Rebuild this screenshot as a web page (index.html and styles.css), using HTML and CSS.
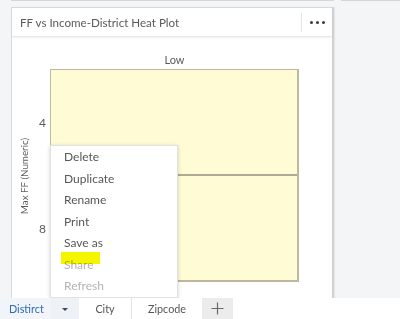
FILE: index.html
```html
<!DOCTYPE html>
<html lang="en">
<head>
<meta charset="utf-8">
<title>Heat Plot</title>
<link rel="stylesheet" href="styles.css">
</head>
<body>
<div class="dash">
  <div class="top-row">
    <div class="top-seg top-seg-main"></div>
    <div class="top-seg top-seg-side"></div>
  </div>
  <div class="card">
    <div class="card-head">
      <div class="card-title">FF vs Income-District Heat Plot</div>
      <div class="head-divider"></div>
      <button class="more" aria-label="More options"><span></span><span></span><span></span></button>
    </div>
    <div class="chart">
      <div class="y-title"><span>Max FF (Numeric)</span></div>
      <div class="col-label">Low</div>
      <div class="ticks">
        <div class="tick">4</div>
        <div class="tick">8</div>
      </div>
      <div class="plot">
        <div class="cell"></div>
        <div class="cell cell-bottom"></div>
      </div>
    </div>
  </div>
  <div class="menu">
    <div class="item">Delete</div>
    <div class="item">Duplicate</div>
    <div class="item">Rename</div>
    <div class="item">Print</div>
    <div class="item">Save as</div>
    <div class="item disabled">Share</div>
    <div class="item disabled">Refresh</div>
    <div class="marker"></div>
  </div>
</div>
<div class="tabs">
  <div class="tab tab-active">Distirct</div>
  <div class="tab-drop"><span class="caret"></span></div>
  <div class="tab tab-city">City</div>
  <div class="tab tab-zip">Zipcode</div>
  <div class="tab-add">
    <svg width="13" height="13" viewBox="0 0 13 13"><path d="M6.5 0.5V12.5M0.5 6.5H12.5" stroke="#6a6a6a" stroke-width="1.2" fill="none"/></svg>
  </div>
</div>
</body>
</html>
```

FILE: styles.css
```css
* { box-sizing: border-box; }
html, body { margin: 0; padding: 0; }
body {
  width: 400px;
  height: 319px;
  overflow: hidden;
  background: #ffffff;
  font-family: Lato, "Noto Sans", sans-serif;
  color: #4c4c4c;
}
.dash {
  position: relative;
  height: 298px;
  background: #f4f5f7;
  overflow: hidden;
  padding-left: 11px;
}
.top-row {
  display: flex;
  gap: 7px;
  height: 1px;
}
.top-seg {
  height: 1px;
  background: #d6d6d6;
}
.top-seg-main { width: 323px; }
.top-seg-side { flex: 1; }
.card {
  margin-top: 6px;
  width: 323px;
  height: 320px;
  background: #ffffff;
  border: 1px solid #dadada;
  border-right: 2px solid #d2d2d2;
  box-shadow: 1px 0 1px rgba(0,0,0,0.06);
}
.card-head {
  height: 29px;
  display: flex;
  align-items: center;
  border-bottom: 1px solid #e8e8e8;
  box-shadow: 0 1px 2px rgba(0,0,0,0.06);
}
.card-title {
  flex: 1;
  padding-left: 8px;
  font-size: 11.6px;
  color: #5a5a5a;
  white-space: nowrap;
}
.head-divider {
  width: 1px;
  height: 19px;
  background: #e3e3e3;
}
.more {
  width: 30px;
  height: 28px;
  border: 0;
  background: transparent;
  padding: 0;
  display: flex;
  align-items: center;
  justify-content: center;
  gap: 3px;
}
.more span {
  width: 3px;
  height: 3px;
  border-radius: 50%;
  background: #3a3a3a;
}
.chart {
  display: grid;
  grid-template-columns: 22px 16px 249px;
  grid-template-rows: 32px 213px;
}
.y-title {
  grid-column: 1;
  grid-row: 2;
  display: flex;
  align-items: center;
  justify-content: center;
}
.y-title span {
  display: block;
  transform: rotate(-90deg);
  white-space: nowrap;
  font-size: 9.8px;
  color: #5e5e5e;
  margin-left: 3px;
}
.col-label {
  grid-column: 3;
  grid-row: 1;
  align-self: end;
  text-align: center;
  font-size: 11px;
  color: #5a5a5a;
  padding-bottom: 3px;
}
.ticks {
  grid-column: 2;
  grid-row: 2;
  display: flex;
  flex-direction: column;
}
.tick {
  flex: 1;
  display: flex;
  align-items: center;
  justify-content: flex-end;
  padding-right: 4px;
  font-size: 12px;
  color: #5a5a5a;
}
.plot {
  grid-column: 3;
  grid-row: 2;
  display: flex;
  flex-direction: column;
  border: 1px solid #bdb99f;
  border-right-width: 2px;
  border-bottom-width: 2px;
  background: #fffbd5;
}
.cell { flex: 1; }
.cell-bottom { border-top: 2px solid #aeab95; }
.menu {
  position: absolute;
  left: 50px;
  top: 145px;
  width: 128px;
  height: 153px;
  background: #ffffff;
  border: 1px solid #e2e2e2;
  box-shadow: 0 1px 4px rgba(0,0,0,0.18);
}
.item {
  height: 21.5px;
  line-height: 21.5px;
  padding-left: 13px;
  font-size: 12px;
  color: #575757;
}
.item.disabled { color: #b3b3b3; }
.marker {
  position: absolute;
  left: 10px;
  top: 106px;
  width: 39px;
  height: 12px;
  background: #f5f500;
  mix-blend-mode: multiply;
}
.tabs {
  display: flex;
  height: 21px;
  align-items: stretch;
}
.tab {
  display: flex;
  align-items: center;
  font-size: 10.8px;
  color: #555555;
}
.tab-active {
  width: 51px;
  padding-left: 9px;
  color: #2f6db0;
  background: #f1f4f8;
}
.tab-drop {
  width: 28px;
  display: flex;
  align-items: center;
  justify-content: center;
  background: #eef1f5;
}
.caret {
  width: 0;
  height: 0;
  border-left: 3px solid transparent;
  border-right: 3px solid transparent;
  border-top: 3px solid #2d4d70;
  margin-top: 2px;
}
.tab-city {
  width: 53px;
  justify-content: center;
  border-right: 1px solid #e4e4e4;
}
.tab-zip {
  width: 70px;
  justify-content: center;
}
.tab-add {
  width: 31px;
  display: flex;
  align-items: center;
  justify-content: center;
  background: #ececec;
}
```
